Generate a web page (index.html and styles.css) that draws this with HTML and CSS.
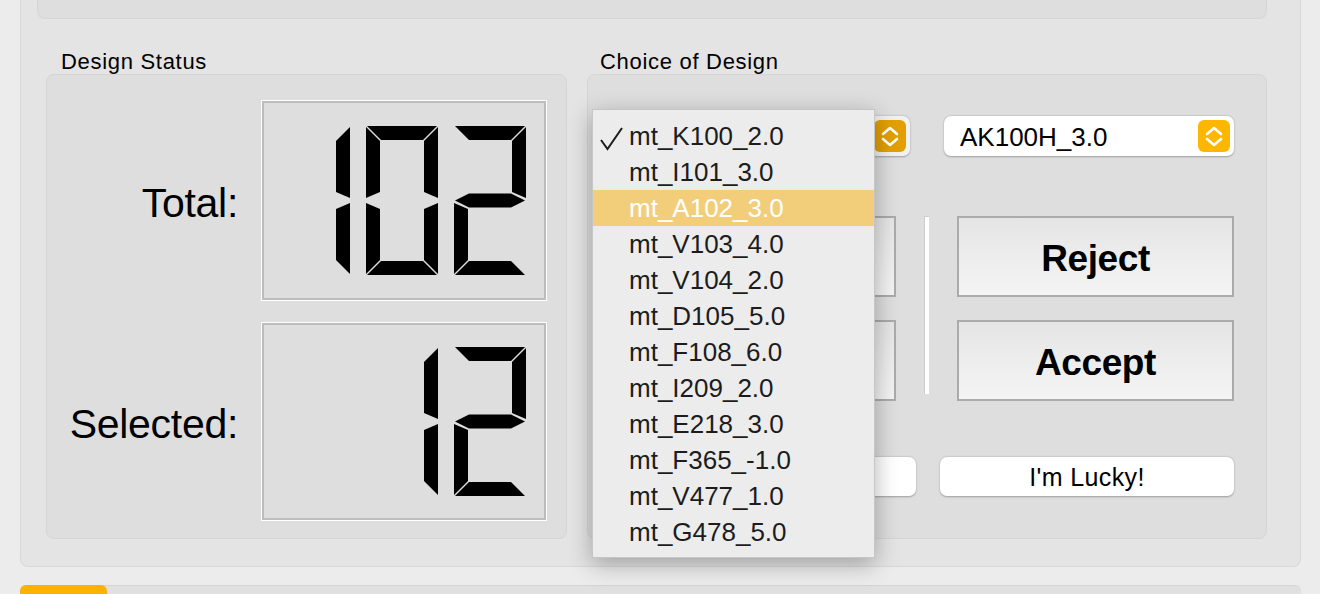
FILE: index.html
```html
<!DOCTYPE html>
<html lang="en">
<head>
  <meta charset="UTF-8">
  <meta name="viewport" content="width=device-width, initial-scale=1.0">
  <title>Design Review</title>
  <link rel="stylesheet" href="styles.css">
</head>
<body>
  <div class="outer">
    <div class="topbox"></div>
    <div class="columns">
      <section class="col col-status">
        <div class="title">Design Status</div>
        <div class="group status">
          <div class="stat-row">
            <span class="stat-label">Total:</span>
            <div class="lcd">
              <svg class="digit" viewBox="0 0 72 149" width="72" height="149">
                <polygon points="72,1 72,72 58,66 58,15"/>
                <polygon points="72,77 72,148 58,134 58,83"/>
              </svg>
              <svg class="digit" viewBox="0 0 72 149" width="72" height="149">
                <polygon points="1,0 71,0 57,14 15,14"/>
                <polygon points="72,1 72,72 58,66 58,15"/>
                <polygon points="72,77 72,148 58,134 58,83"/>
                <polygon points="1,149 71,149 57,135 15,135"/>
                <polygon points="0,77 14,83 14,134 0,148"/>
                <polygon points="0,1 14,15 14,66 0,72"/>
              </svg>
              <svg class="digit" viewBox="0 0 72 149" width="72" height="149">
                <polygon points="1,0 71,0 57,14 15,14"/>
                <polygon points="72,1 72,72 58,66 58,15"/>
                <polygon points="1,74.5 15,67.5 57,67.5 71,74.5 57,81.5 15,81.5"/>
                <polygon points="0,77 14,83 14,134 0,148"/>
                <polygon points="1,149 71,149 57,135 15,135"/>
              </svg>
            </div>
          </div>
          <div class="stat-row">
            <span class="stat-label">Selected:</span>
            <div class="lcd lcd-low">
              <svg class="digit" viewBox="0 0 72 149" width="72" height="149">
                <polygon points="72,1 72,72 58,66 58,15"/>
                <polygon points="72,77 72,148 58,134 58,83"/>
              </svg>
              <svg class="digit" viewBox="0 0 72 149" width="72" height="149">
                <polygon points="1,0 71,0 57,14 15,14"/>
                <polygon points="72,1 72,72 58,66 58,15"/>
                <polygon points="1,74.5 15,67.5 57,67.5 71,74.5 57,81.5 15,81.5"/>
                <polygon points="0,77 14,83 14,134 0,148"/>
                <polygon points="1,149 71,149 57,135 15,135"/>
              </svg>
            </div>
          </div>
        </div>
      </section>

      <section class="col col-choice">
        <div class="title">Choice of Design</div>
        <div class="group choice">
          <div class="popups">
            <!-- first popup is open, its label sits under the menu -->
            <div class="popup popup-open">
              <span></span>
              <span class="stepper">
                <svg viewBox="0 0 32 32" width="32" height="32"><path d="M9 14 L16 8 L23 14 M9 19 L16 25 L23 19"/></svg>
              </span>
            </div>
            <div class="popup">
              <span>AK100H_3.0</span>
              <span class="stepper">
                <svg viewBox="0 0 32 32" width="32" height="32"><path d="M9 14 L16 8 L23 14 M9 19 L16 25 L23 19"/></svg>
              </span>
            </div>
          </div>

          <div class="actions">
            <button class="big-btn"></button>
            <div class="divider"></div>
            <button class="big-btn">Reject</button>
            <button class="big-btn"></button>
            <button class="big-btn">Accept</button>
          </div>

          <div class="small-row">
            <button class="small-btn small-left"></button>
            <button class="small-btn small-right">I'm Lucky!</button>
          </div>

          <ul class="menu">
            <li class="checked">
              <svg class="check" viewBox="0 0 24 24" width="24" height="24"><path d="M2 13 L8.5 22 L23 1"/></svg>
              mt_K100_2.0
            </li>
            <li>mt_I101_3.0</li>
            <li class="hover">mt_A102_3.0</li>
            <li>mt_V103_4.0</li>
            <li>mt_V104_2.0</li>
            <li>mt_D105_5.0</li>
            <li>mt_F108_6.0</li>
            <li>mt_I209_2.0</li>
            <li>mt_E218_3.0</li>
            <li>mt_F365_-1.0</li>
            <li>mt_V477_1.0</li>
            <li>mt_G478_5.0</li>
          </ul>
        </div>
      </section>
    </div>
  </div>
  <div class="progress">
    <div class="progress-fill"></div>
  </div>
</body>
</html>
```

FILE: styles.css
```css
* {
  box-sizing: border-box;
}
body {
  margin: 0;
  height: 594px;
  overflow: hidden;
  background: #ececec;
  font-family: "Liberation Sans", Arial, sans-serif;
  color: #000;
}
.outer {
  margin: 0 19px 0 20px;
  height: 567px;
  background: #e4e4e4;
  border: 1px solid #d8d8d8;
  border-top: none;
  border-radius: 0 0 8px 8px;
}
.topbox {
  margin: 0 33px 0 16px;
  height: 19px;
  background: #dedede;
  border: 1px solid #d5d5d5;
  border-top: none;
  border-radius: 0 0 8px 8px;
}
.columns {
  display: flex;
  gap: 20px;
  padding: 29px 33px 0 25px;
}
.title {
  height: 26px;
  line-height: 27px;
  font-size: 22px;
  letter-spacing: 0.7px;
}
.col-status .title {
  padding-left: 15px;
}
.col-choice .title {
  padding-left: 13px;
}
.group {
  height: 465px;
  background: #dedede;
  border: 1px solid #d5d5d5;
  border-radius: 8px;
}
.col-status {
  width: 521px;
}
.col-choice {
  width: 680px;
}

/* status */
.status {
  display: flex;
  flex-direction: column;
  gap: 21px;
  padding: 25px 19px 0 0;
}
.stat-row {
  display: flex;
  align-items: center;
  justify-content: flex-end;
  gap: 23px;
}
.stat-label {
  padding-top: 6px;
  font-size: 41px;
  letter-spacing: -0.3px;
}
.lcd {
  width: 286px;
  height: 201px;
  border: 1px solid #fff;
  box-shadow: inset 0 0 0 2px #bdbdbd;
  display: flex;
  align-items: center;
  justify-content: flex-end;
  gap: 16px;
  padding-right: 20px;
}
.lcd-low {
  height: 199px;
}
.digit {
  display: block;
  fill: #000;
}

/* choice */
.choice {
  position: relative;
  padding: 41px 32px 0 31px;
}
.popups {
  display: flex;
  gap: 34px;
}
.popup {
  height: 40px;
  width: 290px;
  background: #fff;
  border-radius: 7px;
  box-shadow: 0 0.5px 2px rgba(0, 0, 0, 0.3);
  display: flex;
  align-items: center;
  justify-content: space-between;
  padding: 2px 4px 0 16px;
  font-size: 26px;
}
.popup .stepper {
  margin-top: -2px;
}
.popup-open {
  width: 291px;
  background: #f1f1f1;
}
.stepper {
  width: 32px;
  height: 32px;
  border-radius: 6px;
  background: #fdb700;
  display: flex;
}
.popup-open .stepper {
  background: #e2a000;
}
.stepper path {
  fill: none;
  stroke: #fff;
  stroke-width: 2.6;
  stroke-linecap: round;
  stroke-linejoin: round;
}
.actions {
  margin-top: 60px;
  display: grid;
  grid-template-columns: 277px 61px 277px;
  grid-template-rows: 81px 81px;
  row-gap: 23px;
}
.actions .divider {
  grid-column: 2;
  grid-row: 1 / span 2;
  justify-self: center;
  width: 5px;
  height: 178px;
  background: #fff;
  border-left: 1px solid #cdcdcd;
  border-top: 1px solid #cdcdcd;
}
.big-btn {
  font-family: inherit;
  font-size: 37px;
  font-weight: bold;
  letter-spacing: -0.4px;
  color: #000;
  border: 2px solid #ababab;
  background: linear-gradient(#e5e5e5, #f4f4f4);
  padding: 4px 0 0;
}
.small-row {
  margin-top: 56px;
  display: flex;
  gap: 24px;
}
.small-btn {
  height: 39px;
  border: none;
  border-radius: 7px;
  background: #fff;
  box-shadow: 0 0.5px 2px rgba(0, 0, 0, 0.3);
  font-family: inherit;
  font-size: 25px;
  letter-spacing: 0.4px;
  color: #000;
  padding: 2px 0 0;
}
.small-left {
  width: 297px;
}
.small-right {
  width: 294px;
}

/* open popup menu */
.menu {
  position: absolute;
  left: 4px;
  top: 34px;
  width: 283px;
  height: 449px;
  margin: 0;
  padding: 8px 0 0;
  list-style: none;
  background: #ececec;
  border: 1px solid #c6c6c6;
  box-shadow: 0 6px 22px rgba(0, 0, 0, 0.3);
}
.menu li {
  position: relative;
  height: 36px;
  line-height: 37px;
  padding-left: 36px;
  font-size: 26px;
  color: #1c1c1c;
}
.menu li.hover {
  background: #f2ce7b;
  color: #fff;
}
.check {
  position: absolute;
  left: 6px;
  top: 9px;
  fill: none;
  stroke: #1c1c1c;
  stroke-width: 2;
}
.progress {
  margin: 18px 19px 0 20px;
  height: 12px;
  background: #e0e0e0;
  border-top: 1px solid #d4d4d4;
  border-radius: 6px 6px 0 0;
}
.progress-fill {
  width: 87px;
  height: 12px;
  margin-top: -1px;
  background: #fdb200;
  border-radius: 6px 6px 0 0;
}
```
